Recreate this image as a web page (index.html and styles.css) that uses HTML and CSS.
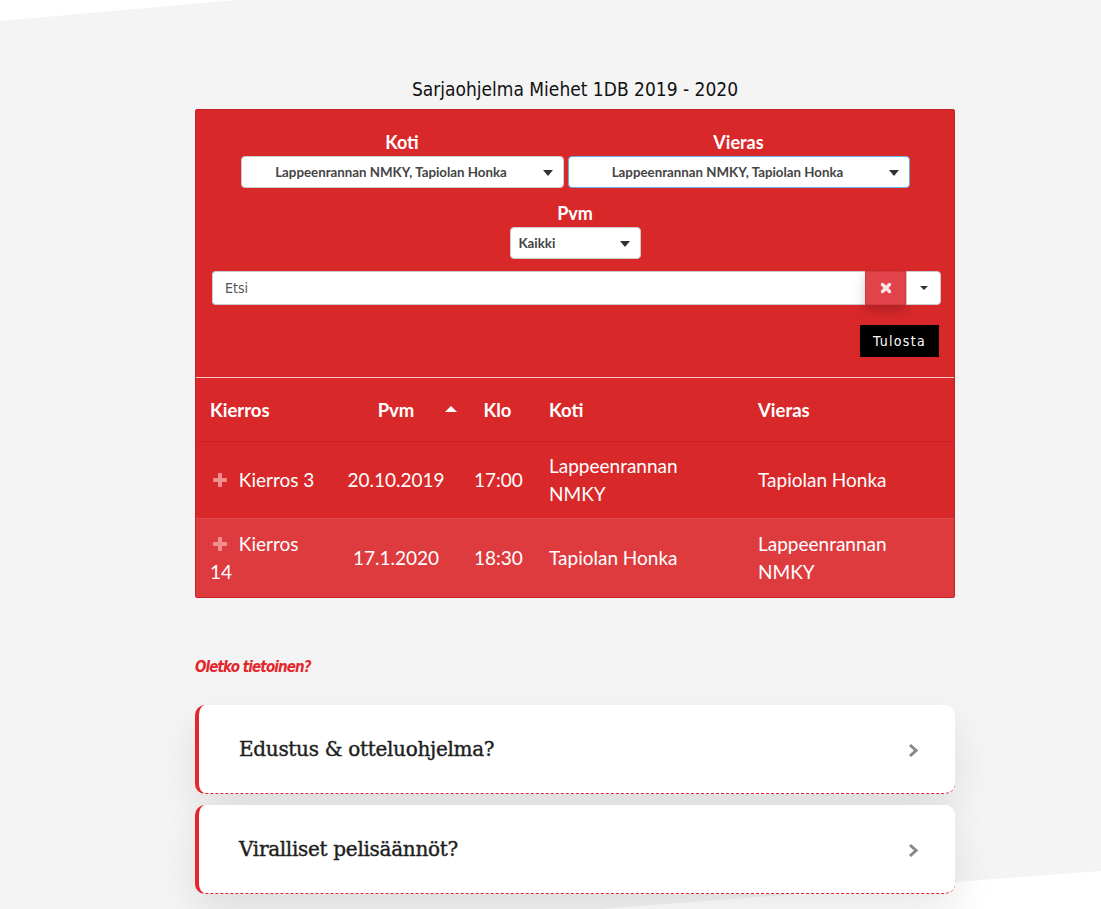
FILE: index.html
```html
<!DOCTYPE html>
<html lang="fi">
<head>
  <meta charset="UTF-8">
  <title>Sarjaohjelma</title>
  <link rel="stylesheet" href="styles.css">
</head>
<body>
  <div class="wedge wedge--top"></div>
  <div class="wedge wedge--bottom"></div>

  <div class="page">
    <h2 class="schedule-title">Sarjaohjelma Miehet 1DB 2019 - 2020</h2>

    <!-- Schedule panel -->
    <div class="schedule">
      <div class="filters">
        <div class="filter filter--home">
          <label class="filter-label">Koti</label>
          <div class="select select--center">
            <span>Lappeenrannan NMKY, Tapiolan Honka</span>
            <i class="caret"></i>
          </div>
        </div>
        <div class="filter filter--away">
          <label class="filter-label">Vieras</label>
          <div class="select select--center select--focus">
            <span>Lappeenrannan NMKY, Tapiolan Honka</span>
            <i class="caret"></i>
          </div>
        </div>
      </div>

      <div class="filters">
        <div class="filter filter--date">
          <label class="filter-label">Pvm</label>
          <div class="select">
            <span>Kaikki</span>
            <i class="caret"></i>
          </div>
        </div>
      </div>

      <div class="search">
        <div class="search-input">Etsi</div>
        <button class="search-clear">
          <svg viewBox="0 0 12 12" width="12" height="12">
            <path d="M2.5 2.5 L9.5 9.5 M9.5 2.5 L2.5 9.5" />
          </svg>
        </button>
        <button class="search-toggle"><i class="caret caret--small"></i></button>
      </div>

      <div class="print-row">
        <button class="print">Tulosta</button>
      </div>

      <table class="games">
        <colgroup>
          <col class="col-round">
          <col class="col-date">
          <col class="col-time">
          <col class="col-home">
          <col class="col-away">
        </colgroup>
        <thead>
          <tr>
            <th>Kierros</th>
            <th class="center sorted">Pvm <i class="sort-up"></i></th>
            <th class="center">Klo</th>
            <th>Koti</th>
            <th>Vieras</th>
          </tr>
        </thead>
        <tbody>
          <tr>
            <td><svg class="plus" viewBox="0 0 16 16" width="16" height="16"><rect x="6" y="1" width="4" height="14" rx="1"/><rect x="1" y="6" width="14" height="4" rx="1"/></svg> Kierros 3</td>
            <td class="center">20.10.2019</td>
            <td class="center">17:00</td>
            <td>Lappeenrannan NMKY</td>
            <td>Tapiolan Honka</td>
          </tr>
          <tr class="odd">
            <td><svg class="plus" viewBox="0 0 16 16" width="16" height="16"><rect x="6" y="1" width="4" height="14" rx="1"/><rect x="1" y="6" width="14" height="4" rx="1"/></svg> Kierros 14</td>
            <td class="center">17.1.2020</td>
            <td class="center">18:30</td>
            <td>Tapiolan Honka</td>
            <td>Lappeenrannan NMKY</td>
          </tr>
        </tbody>
      </table>
    </div>

    <!-- Info cards -->
    <p class="info-title">Oletko tietoinen?</p>

    <a href="#" class="info-card">
      <h3>Edustus &amp; otteluohjelma?</h3>
      <svg class="chevron" viewBox="0 0 10 15" width="10" height="15"><path d="M2 2 L8 7.5 L2 13" /></svg>
    </a>
    <a href="#" class="info-card">
      <h3>Viralliset pelisäännöt?</h3>
      <svg class="chevron" viewBox="0 0 10 15" width="10" height="15"><path d="M2 2 L8 7.5 L2 13" /></svg>
    </a>
  </div>
</body>
</html>
```

FILE: styles.css
```css
*, *:before,
*:after {
  box-sizing: border-box;
}

html,
body {
  margin: 0;
  height: 100%;
}

body {
  position: relative;
  overflow: hidden;
  background: #f4f4f4;
  font-family: 'Lato', sans-serif;
  color: #222;
}

/* decorative background shapes */
.wedge {
  position: absolute;
  background: #fff;
  z-index: 0;
}

.wedge--top {
  top: 0;
  left: 0;
  width: 236px;
  height: 21px;
  clip-path: polygon(0 0, 100% 0, 0 100%);
}

.wedge--bottom {
  right: 0;
  bottom: 0;
  width: 500px;
  height: 38px;
  clip-path: polygon(100% 0, 100% 100%, 0 100%);
}

.page {
  position: relative;
  z-index: 1;
  width: 760px;
  margin-left: 195px;
  padding-top: 77px;
}

.schedule-title {
  margin: 0 0 8px;
  text-align: center;
  font: 400 19px 'DejaVu Sans Condensed', sans-serif;
  color: #111;
  line-height: 24px;
}

.schedule {
  background: #d9282a;
  border: 1px solid #c92225;
  border-radius: 2px;
  padding-top: 21px;
}

.filters {
  display: flex;
  justify-content: center;
  gap: 4px;
}

.filter {
  display: flex;
  flex-direction: column;
  align-items: center;
}

.filters + .filters {
  margin-top: 14px;
}

.filter-label {
  font-weight: 700;
  font-size: 18px;
  line-height: 22px;
  color: #fff;
  margin-bottom: 3px;
}

.select {
  position: relative;
  display: flex;
  align-items: center;
  height: 32px;
  padding: 0 30px 0 8px;
  background: #fff;
  border: 1px solid #ccc;
  border-radius: 4px;
  font-weight: 700;
  font-size: 13.3px;
  color: #444;
}

.select--center {
  justify-content: center;
}

.select--focus {
  border-color: #66afe9;
}

.filter--home .select {
  width: 323px;
}

.filter--away .select {
  width: 342px;
}

.filter--date .select {
  width: 131px;
}

.caret {
  position: absolute;
  right: 10px;
  top: 13px;
  width: 0;
  height: 0;
  border-left: 5px solid transparent;
  border-right: 5px solid transparent;
  border-top: 6px solid #333;
}

.caret--small {
  position: static;
  display: inline-block;
  border-left-width: 4px;
  border-right-width: 4px;
  border-top-width: 4px;
}

.search {
  display: flex;
  margin: 12px 13px 0 16px;
  height: 34px;
}

.search-input {
  flex: 1;
  display: flex;
  align-items: center;
  padding-left: 12px;
  background: #fff;
  border: 1px solid #ccc;
  border-right: 0;
  border-radius: 4px 0 0 4px;
  font: 400 14px 'DejaVu Sans Condensed', sans-serif;
  color: #555;
}

.search-clear {
  width: 41px;
  border: 1px solid #d33a40;
  background: #e0444a;
  box-shadow: 0 5px 12px rgba(0, 0, 0, .22);
  padding: 0;
  display: flex;
  align-items: center;
  justify-content: center;
}

.search-clear path {
  stroke: #fbe3e3;
  stroke-width: 3.4;
  stroke-linecap: round;
  fill: none;
}

.search-toggle {
  width: 35px;
  background: #fff;
  border: 1px solid #ccc;
  border-radius: 0 4px 4px 0;
  padding: 0;
  display: flex;
  align-items: center;
  justify-content: center;
}

.print-row {
  display: flex;
  justify-content: flex-end;
  padding: 20px 15px 0;
}

.print {
  height: 32px;
  padding: 0 13px;
  background: #000;
  color: #fff;
  border: 0;
  font: 400 14px 'DejaVu Sans Condensed', sans-serif;
  letter-spacing: 1.3px;
}

.games {
  width: 100%;
  margin-top: 20px;
  border-collapse: collapse;
  table-layout: fixed;
  border-top: 1px solid rgba(255, 255, 255, .75);
  color: #fff;
}

.col-round { width: 136px; }
.col-date { width: 128px; }
.col-time { width: 75px; }
.col-home { width: 209px; }
.col-away { width: auto; }

.games th,
.games td {
  padding: 0 14px;
  text-align: left;
  vertical-align: middle;
}

.games th {
  height: 64px;
  font-weight: 700;
  font-size: 18.5px;
  border-bottom: 1px solid #c82326;
}

.games td {
  height: 77px;
  font-size: 19px;
  line-height: 28px;
}

.games .center {
  text-align: center;
}

.games tbody tr + tr td {
  border-top: 1px solid #e04a4e;
}

.games tr.odd td {
  background: #de3b3f;
  height: 78px;
}

.sorted {
  position: relative;
}

.sort-up {
  position: absolute;
  right: 3px;
  top: 28px;
  width: 0;
  height: 0;
  border-left: 6px solid transparent;
  border-right: 6px solid transparent;
  border-bottom: 6px solid #fff;
}

.plus {
  vertical-align: -1px;
  margin: 0 6px 0 2px;
  fill: #f28e8e;
}

.info-title {
  margin: 60px 0 29px;
  font: italic 700 15px 'DejaVu Sans Condensed', sans-serif;
  letter-spacing: -0.9px;
  color: #e3272d;
}

.info-card {
  display: flex;
  align-items: center;
  justify-content: space-between;
  height: 89px;
  margin-bottom: 11px;
  padding: 3px 37px 0 40px;
  background: #fff;
  border-left: 4px solid #e3272d;
  border-bottom: 1px dashed #e3272d;
  border-radius: 10px;
  text-decoration: none;
  box-shadow: 0 18px 40px rgba(0, 0, 0, .09);
}

.info-card h3 {
  margin: 0 0 3px;
  font: 400 20px 'DejaVu Serif', serif;
  letter-spacing: -0.3px;
  color: #1e1e1e;
  -webkit-text-stroke: 0.4px #1e1e1e;
}

.chevron path {
  fill: none;
  stroke: #888;
  stroke-width: 3;
}
```
